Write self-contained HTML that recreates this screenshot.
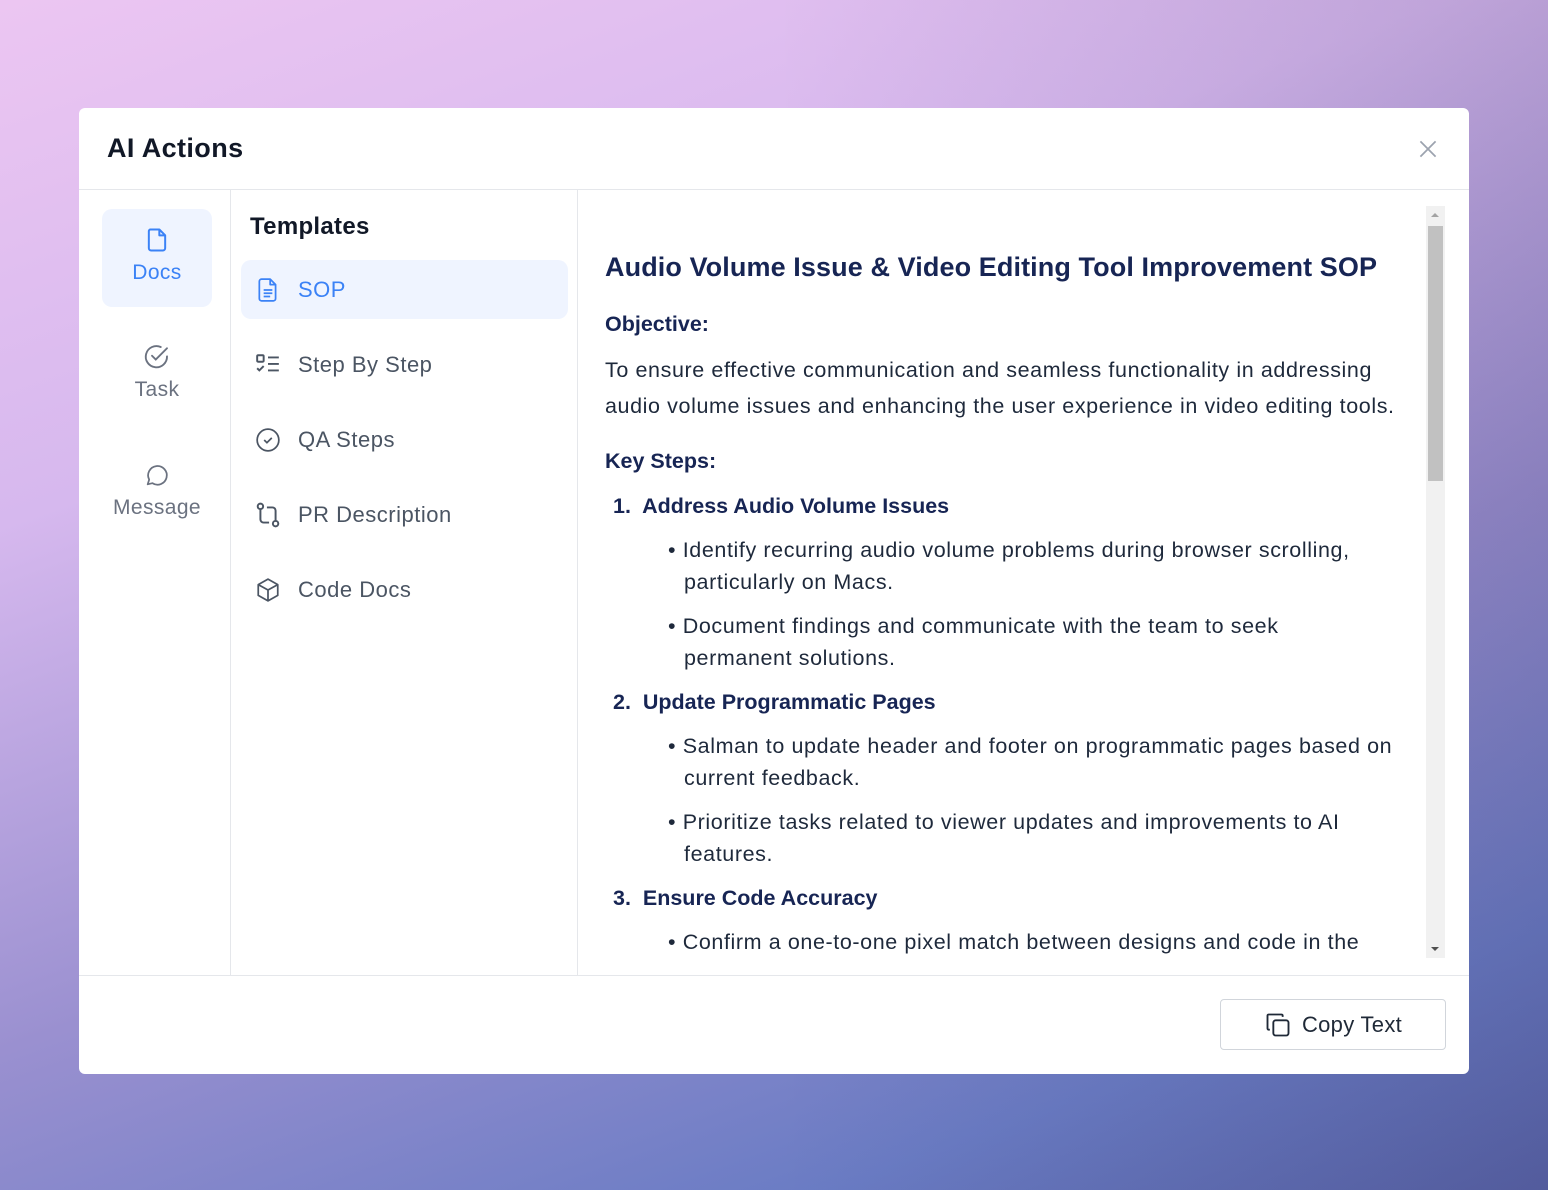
<!DOCTYPE html>
<html><head><meta charset="utf-8"><style>
*{box-sizing:border-box;margin:0;padding:0}
body{width:1548px;height:1190px;overflow:hidden;font-family:"Liberation Sans",sans-serif;position:relative;
background:linear-gradient(160deg,#ecc6f2 0%,#d6b8ee 30%,#9a90d0 60%,#6a7cc4 85%,#5a66aa 100%);}
.bg2{position:absolute;inset:0;background:linear-gradient(90deg,rgba(0,0,0,0) 50%,rgba(40,30,80,.15) 100%)}
.modal{position:absolute;left:79px;top:108px;width:1390px;height:966px;background:#fff;border-radius:6px;overflow:hidden}
.hd{height:82px;border-bottom:1px solid #e5e7eb;position:relative}
.hd h1{position:absolute;left:28px;top:25px;font-size:27px;font-weight:bold;color:#111827;letter-spacing:.4px}
.x{position:absolute;right:28px;top:28px}
.col1{position:absolute;left:0;top:82px;width:152px;height:785px;border-right:1px solid #e5e7eb}
.col2{position:absolute;left:152px;top:82px;width:347px;height:785px;border-right:1px solid #e5e7eb}
.nav{position:absolute;left:23px;width:110px;height:98px;text-align:center;font-size:21px;color:#6b7280;border-radius:10px;letter-spacing:.4px}
.nav svg{display:block;margin:0 auto 6px}
.nav.on{background:#eff4ff;color:#3b82f6}
.col2 h2{position:absolute;left:19px;top:23px;font-size:24px;font-weight:bold;color:#111827;letter-spacing:.3px}
.it{position:absolute;left:10px;width:327px;height:59px;border-radius:10px;font-size:22px;color:#4b5563;display:flex;align-items:center;padding-left:14px;letter-spacing:.5px}
.it svg{margin-right:17px}
.it.on{background:#eff4ff;color:#3b82f6}
.ct{position:absolute;left:526px;top:82px;width:810px;height:785px;overflow:hidden;color:#1e293b;font-size:21.5px;letter-spacing:.6px}
.ct h3{position:absolute;left:0;top:62px;font-size:27px;font-weight:bold;color:#172554;white-space:nowrap;letter-spacing:.1px}
.a{position:absolute;white-space:nowrap}
.b{font-weight:bold;color:#172554;letter-spacing:0}
.sb{position:absolute;left:1347px;top:98px;width:19px;height:752px;background:#f1f1f1}
.sb .t{position:absolute;left:2px;top:20px;width:15px;height:255px;background:#c1c1c1}
.sb .u{position:absolute;left:5px;top:7px;border:4px solid transparent;border-bottom:4px solid #a3a3a3;border-top:0}
.sb .d{position:absolute;left:5px;bottom:7px;border:4px solid transparent;border-top:4px solid #505050;border-bottom:0}
.ft{position:absolute;left:0;top:867px;width:100%;height:1px;background:#e5e7eb}
.btn{position:absolute;left:1141px;top:891px;width:226px;height:51px;border:1px solid #d1d5db;border-radius:4px;font-size:22px;color:#1f2937;display:flex;align-items:center;justify-content:center;background:#fff;letter-spacing:.3px}
.btn svg{margin-right:10px}
</style></head><body><div class="bg2"></div>
<div class="modal">
<div class="hd"><h1>AI Actions</h1>
<svg class="x" width="26" height="26" viewBox="0 0 24 24" fill="none" stroke="#9ca3af" stroke-width="1.6"><path d="M5 5l14 14M19 5L5 19"/></svg></div>
<div class="col1">
<div class="nav on" style="top:19px;padding-top:16px"><svg width="28" height="30" viewBox="0 0 24 24" fill="none" stroke="#3b82f6" stroke-width="1.7" stroke-linejoin="round"><path d="M6 3h8l5 5v11a2 2 0 0 1-2 2H7a2 2 0 0 1-2-2V5a2 2 0 0 1 1-2zM14 3v5h5"/></svg>Docs</div>
<div class="nav" style="top:136px;padding-top:16px"><svg width="30" height="30" viewBox="0 0 24 24" fill="none" stroke="#6b7280" stroke-width="1.5" stroke-linecap="round"><path d="M20 11.5A8.5 8.5 0 1 1 15 4"/><path d="M8 11l3 3 9-9"/></svg>Task</div>
<div class="nav" style="top:254px;padding-top:16px"><svg width="28" height="30" viewBox="0 0 24 24" fill="none" stroke="#6b7280" stroke-width="1.5" stroke-linejoin="round"><path d="M4 20l1.3-4A8 8 0 1 1 8 19z"/></svg>Message</div>
</div>
<div class="col2"><h2>Templates</h2>
<div class="it on" style="top:70px"><svg width="26" height="28" viewBox="0 0 24 24" fill="none" stroke="#3b82f6" stroke-width="1.6" stroke-linejoin="round"><path d="M6 2h8l5 5v13a2 2 0 0 1-2 2H6a2 2 0 0 1-2-2V4a2 2 0 0 1 2-2zM14 2v5h5M8 12h8M8 15h8M8 18h6"/></svg>SOP</div>
<div class="it" style="top:145px"><svg width="26" height="26" viewBox="0 0 24 24" fill="none" stroke="#4b5563" stroke-width="1.8"><rect x="2" y="3" width="6" height="6" rx="1"/><path d="M2 15l2 2 4-4M12 5h10M12 11h10M12 17h10"/></svg>Step By Step</div>
<div class="it" style="top:220px"><svg width="26" height="26" viewBox="0 0 24 24" fill="none" stroke="#4b5563" stroke-width="1.6"><circle cx="12" cy="12" r="10"/><path d="M8.5 12l2.5 2.5 4.5-4.5"/></svg>QA Steps</div>
<div class="it" style="top:295px"><svg width="26" height="26" viewBox="0 0 24 24" fill="none" stroke="#4b5563" stroke-width="1.8"><circle cx="5" cy="4" r="2.5"/><circle cx="19" cy="20" r="2.5"/><path d="M5 7v9a3 3 0 0 0 3 3h5M19 17V8a3 3 0 0 0-3-3h-5"/></svg>PR Description</div>
<div class="it" style="top:370px"><svg width="26" height="26" viewBox="0 0 24 24" fill="none" stroke="#4b5563" stroke-width="1.6" stroke-linejoin="round"><path d="M12 2l9 5v10l-9 5-9-5V7zM3 7l9 5 9-5M12 12v10"/></svg>Code Docs</div>
</div>
<div class="ct">
<h3>Audio Volume Issue &amp; Video Editing Tool Improvement SOP</h3>
<div class="a b" style="top:122px">Objective:</div>
<div class="a" style="top:168px">To ensure effective communication and seamless functionality in addressing</div>
<div class="a" style="top:204px">audio volume issues and enhancing the user experience in video editing tools.</div>
<div class="a b" style="top:259px">Key Steps:</div>
<div class="a b" style="top:304px;left:8px">1.&nbsp; Address Audio Volume Issues</div>
<div class="a" style="top:348px;left:63px">• Identify recurring audio volume problems during browser scrolling,</div>
<div class="a" style="top:380px;left:79px">particularly on Macs.</div>
<div class="a" style="top:424px;left:63px">• Document findings and communicate with the team to seek</div>
<div class="a" style="top:456px;left:79px">permanent solutions.</div>
<div class="a b" style="top:500px;left:8px">2.&nbsp; Update Programmatic Pages</div>
<div class="a" style="top:544px;left:63px">• Salman to update header and footer on programmatic pages based on</div>
<div class="a" style="top:576px;left:79px">current feedback.</div>
<div class="a" style="top:620px;left:63px">• Prioritize tasks related to viewer updates and improvements to AI</div>
<div class="a" style="top:652px;left:79px">features.</div>
<div class="a b" style="top:696px;left:8px">3.&nbsp; Ensure Code Accuracy</div>
<div class="a" style="top:740px;left:63px">• Confirm a one-to-one pixel match between designs and code in the</div>
</div>
<div class="sb"><div class="u"></div><div class="t"></div><div class="d"></div></div>
<div class="ft"></div>
<div class="btn"><svg width="28" height="28" viewBox="0 0 24 24" fill="none" stroke="#1f2937" stroke-width="1.6"><rect x="8" y="8" width="13" height="13" rx="2"/><path d="M5 16H4a1 1 0 0 1-1-1V4a1 1 0 0 1 1-1h11a1 1 0 0 1 1 1v1"/></svg>Copy Text</div>
</div>
</body></html>
